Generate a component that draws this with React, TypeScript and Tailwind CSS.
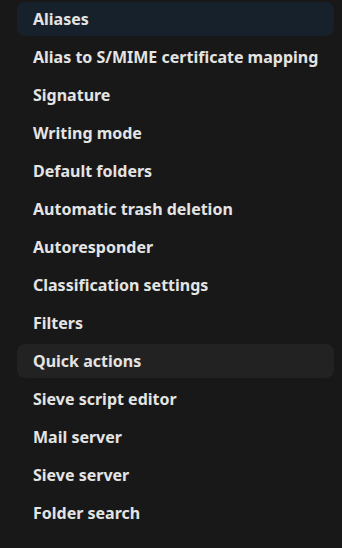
const items = [
  "Aliases",
  "Alias to S/MIME certificate mapping",
  "Signature",
  "Writing mode",
  "Default folders",
  "Automatic trash deletion",
  "Autoresponder",
  "Classification settings",
  "Filters",
  "Quick actions",
  "Sieve script editor",
  "Mail server",
  "Sieve server",
  "Folder search",
];

export default function App() {
  return (
    <div
      className="min-h-[548px] w-full bg-[#181818] pt-[2px] pl-[17px] pr-[8px]"
      style={{ fontFamily: '"Noto Sans", sans-serif' }}
    >
      <ul className="flex flex-col gap-1">
        {items.map((label, i) => (
          <li
            key={label}
            className={
              "flex h-[34px] items-center rounded-lg pl-4 text-base font-bold text-[#e4e4e4] " +
              (i === 0 ? "bg-[#16212b]" : i === 9 ? "bg-[#222222]" : "")
            }
          >
            {label}
          </li>
        ))}
      </ul>
    </div>
  );
}
